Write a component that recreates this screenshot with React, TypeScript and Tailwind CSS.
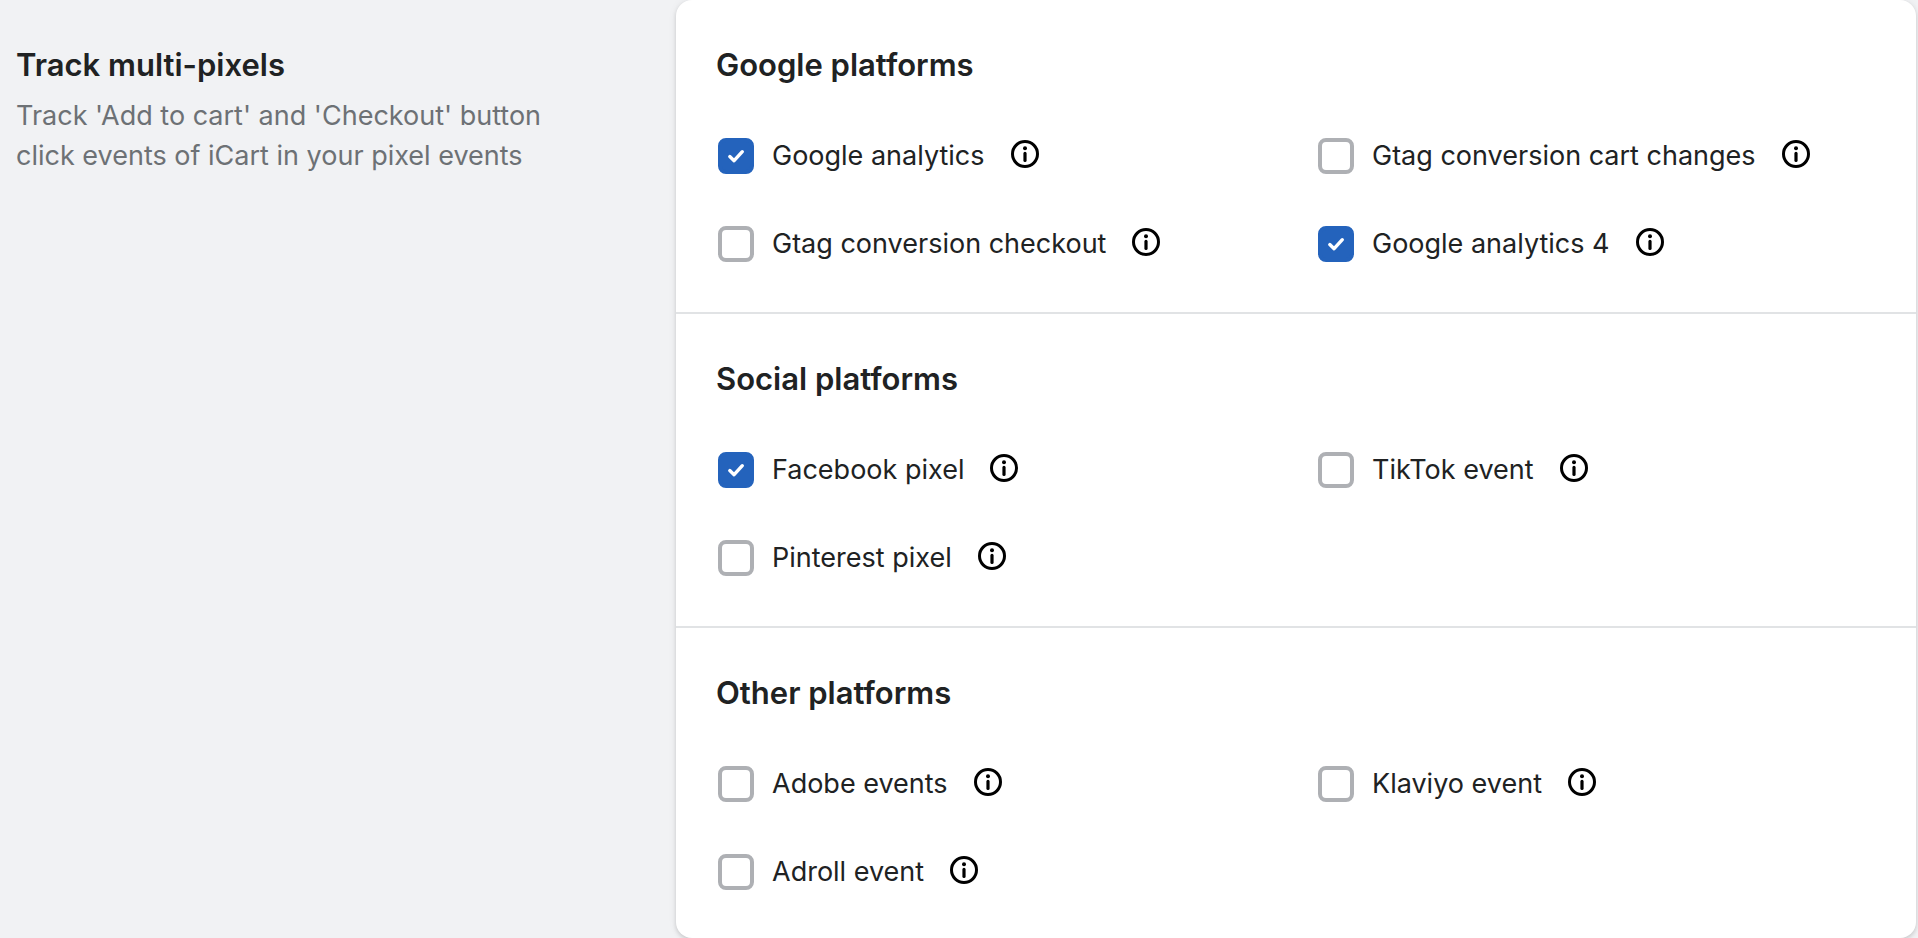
import { useState } from "react";

type Pixel = { id: string; label: string; enabled?: boolean };
type Group = { title: string; pixels: Pixel[] };

const groups: Group[] = [
  {
    title: "Google platforms",
    pixels: [
      { id: "google-analytics", label: "Google analytics", enabled: true },
      { id: "gtag-cart", label: "Gtag conversion cart changes" },
      { id: "gtag-checkout", label: "Gtag conversion checkout" },
      { id: "google-analytics-4", label: "Google analytics 4", enabled: true },
    ],
  },
  {
    title: "Social platforms",
    pixels: [
      { id: "facebook", label: "Facebook pixel", enabled: true },
      { id: "tiktok", label: "TikTok event" },
      { id: "pinterest", label: "Pinterest pixel" },
    ],
  },
  {
    title: "Other platforms",
    pixels: [
      { id: "adobe", label: "Adobe events" },
      { id: "klaviyo", label: "Klaviyo event" },
      { id: "adroll", label: "Adroll event" },
    ],
  },
];

function InfoIcon() {
  return (
    <svg viewBox="0 0 28 28" className="size-7" fill="none" aria-hidden="true">
      <circle cx="14" cy="14" r="12.5" stroke="#000" strokeWidth="3" />
      <circle cx="14" cy="8.2" r="2" fill="#000" />
      <path d="M14 13.4v7" stroke="#000" strokeWidth="3.2" strokeLinecap="round" />
    </svg>
  );
}

function PixelOption({ pixel }: { pixel: Pixel }) {
  const [checked, setChecked] = useState(Boolean(pixel.enabled));
  return (
    <div className="flex h-10 items-center">
      <span className="grid size-10 shrink-0 place-items-center">
        <input
          id={pixel.id}
          type="checkbox"
          checked={checked}
          onChange={(e) => setChecked(e.target.checked)}
          className="peer col-start-1 row-start-1 size-9 appearance-none rounded-lg border-4 border-[#aeb0b4] bg-white checked:border-[#2463bc] checked:bg-[#2463bc]"
        />
        <svg
          viewBox="0 0 36 36"
          className="pointer-events-none invisible col-start-1 row-start-1 size-9 peer-checked:visible"
          fill="none"
          aria-hidden="true"
        >
          <path
            d="M11.8 18.6l4.3 4.1 8.2-9"
            stroke="#fff"
            strokeWidth="3.4"
            strokeLinecap="round"
            strokeLinejoin="round"
          />
        </svg>
      </span>
      <label htmlFor={pixel.id} className="ml-4 text-[27px] leading-10 text-[#202223]">
        {pixel.label}
      </label>
      <button type="button" aria-label={"About " + pixel.label} className="mb-1 ml-[26px] shrink-0">
        <InfoIcon />
      </button>
    </div>
  );
}

export default function App() {
  return (
    <main className="grid min-h-screen grid-cols-[1fr_2fr] gap-10 bg-[#f1f2f4] pr-0.5 pl-4 font-['Inter','Liberation_Sans',sans-serif]">
      <header className="pt-10 pr-10">
        <h1 className="text-[31px] leading-[50px] font-semibold text-[#202223]">Track multi-pixels</h1>
        <p className="mt-1.5 text-[27px] leading-10 text-[#6d7175]">
          Track 'Add to cart' and 'Checkout' button click events of iCart in your pixel events
        </p>
      </header>
      <div className="divide-y-2 divide-[#e1e3e5] rounded-2xl bg-white shadow-[0_0_10px_rgba(23,24,24,0.05),0_2px_4px_rgba(0,0,0,0.15)]">
        {groups.map((group) => (
          <section key={group.title} className="px-10 pt-10 pb-12 last:pb-11">
            <h2 className="text-[31px] leading-[50px] font-semibold text-[#202223]">{group.title}</h2>
            <div className="mt-[46px] grid grid-cols-2 gap-x-10 gap-y-12">
              {group.pixels.map((pixel) => (
                <PixelOption key={pixel.id} pixel={pixel} />
              ))}
            </div>
          </section>
        ))}
      </div>
    </main>
  );
}
